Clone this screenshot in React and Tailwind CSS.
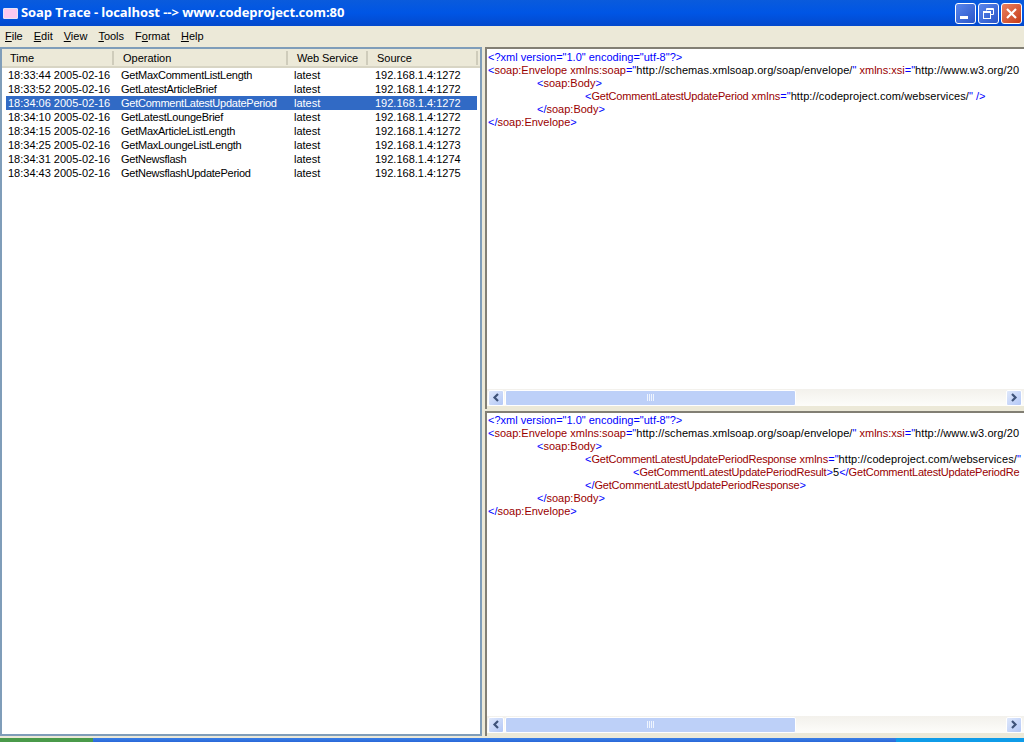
const rows = [
  ["18:33:44 2005-02-16", "GetMaxCommentListLength", "latest", "192.168.1.4:1272"],
  ["18:33:52 2005-02-16", "GetLatestArticleBrief", "latest", "192.168.1.4:1272"],
  ["18:34:06 2005-02-16", "GetCommentLatestUpdatePeriod", "latest", "192.168.1.4:1272"],
  ["18:34:10 2005-02-16", "GetLatestLoungeBrief", "latest", "192.168.1.4:1272"],
  ["18:34:15 2005-02-16", "GetMaxArticleListLength", "latest", "192.168.1.4:1272"],
  ["18:34:25 2005-02-16", "GetMaxLoungeListLength", "latest", "192.168.1.4:1273"],
  ["18:34:31 2005-02-16", "GetNewsflash", "latest", "192.168.1.4:1274"],
  ["18:34:43 2005-02-16", "GetNewsflashUpdatePeriod", "latest", "192.168.1.4:1275"],
];
const B = ({ children }) => <span className="text-[#0000ff]">{children}</span>;
const R = ({ children }) => <span className="text-[#990000]">{children}</span>;
const G = ({ children }) => <span className="text-[#990000] tracking-[-0.2px]">{children}</span>;
const K = ({ children }) => <span className="text-black tracking-[0.1px]">{children}</span>;

const Line = ({ indent = "", children }) => (
  <div className={`h-[13px] leading-[13px] whitespace-nowrap ${indent}`}>{children}</div>
);
const Tag = ({ name, close }) => (
  <>
    <B>{close ? "</" : "<"}</B>
    {name.startsWith("Get") ? <G>{name}</G> : <R>{name}</R>}
    <B>&gt;</B>
  </>
);
const Head = () => (
  <>
    <Line><B>&lt;?xml version="1.0" encoding="utf-8"?&gt;</B></Line>
    <Line>
      <B>&lt;</B><R>soap:Envelope xmlns:soap</R><B>="</B><K>http://schemas.xmlsoap.org/soap/envelope/</K><B>"</B>{" "}
      <R>xmlns:xsi</R><B>="</B><K>http://www.w3.org/20</K>
    </Line>
  </>
);
const Arrow = ({ dir }) => (
  <div className="w-[16px] h-[16px] shrink-0 rounded-[2px] border border-white bg-gradient-to-br from-[#dfe8fb] to-[#b4c8f6] flex items-center justify-center">
    <svg width="8" height="9" viewBox="0 0 8 9">
      <path d={dir === "l" ? "M6 1 L2.5 4.5 L6 8" : "M2 1 L5.5 4.5 L2 8"} fill="none" stroke="#3f5379" strokeWidth="2.2" />
    </svg>
  </div>
);
const Scrollbar = () => (
  <div className="h-[17px] shrink-0 bg-gradient-to-b from-[#f3f1ec] to-[#fdfdfa] flex items-center pl-[1px] pr-[2px] gap-[1px]">
    <Arrow dir="l" />
    <div className="flex-1 flex items-center">
      <div className="w-[291px] h-[16px] rounded-[2px] border border-white bg-[#bdd0f8] flex items-center justify-center gap-[1px]">
        {[0, 1, 2, 3].map((i) => (
          <div key={i} className="w-[1px] h-[7px] bg-[#eef4fe]" />
        ))}
      </div>
    </div>
    <Arrow dir="r" />
  </div>
);
const XmlPane = ({ className, pad, children }) => (
  <div className={`flex flex-col border-t-2 border-l-2 border-t-[#827f74] border-l-[#827f74] bg-[#ece9d8] min-h-0 overflow-hidden pb-[3px] ${className}`}>
    <div className={`flex-1 bg-white pl-[1px] overflow-hidden font-['Liberation_Sans',sans-serif] text-[11px] ${pad}`}>{children}</div>
    <Scrollbar />
  </div>
);
const WinBtn = ({ bg, children }) => (
  <div className={`w-[21px] h-[21px] rounded-[3px] border border-white flex items-center justify-center ${bg}`}>{children}</div>
);
const menu = [["F", "ile"], ["E", "dit"], ["V", "iew"], ["T", "ools"], ["Fo", "rmat"], ["H", "elp"]];

export default function App() {
  return (
    <div className="w-[1024px] h-[742px] flex flex-col overflow-hidden bg-[#ece9d8] font-['Liberation_Sans',sans-serif]">
      <div className="h-[26px] shrink-0 flex items-center pl-[2px] pr-[2px] bg-gradient-to-b from-[#0a5bdc] via-[#0055e5] to-[#0349cc]">
        <div className="w-[15px] h-[11px] ml-[1px] rounded-[1px] bg-[#fbc8f0] border border-[#e8e4f4]" />
        <div className="ml-[3px] text-white font-bold text-[13px] whitespace-nowrap font-['Open_Sans',sans-serif] tracking-[-0.07px]">
          Soap Trace - localhost --&gt; www.codeproject.com:80
        </div>
        <div className="ml-auto flex gap-[2px]">
          <WinBtn bg="bg-gradient-to-br from-[#5a86ec] to-[#2a55c8]">
            <div className="w-[8px] h-[3px] bg-white mt-[9px] mr-[4px]" />
          </WinBtn>
          <WinBtn bg="bg-gradient-to-br from-[#5a86ec] to-[#2a55c8]">
            <svg width="13" height="13" viewBox="0 0 13 13" fill="none" stroke="white">
              <path d="M4.5 3.5V1.5H11.5V7.5H9" />
              <rect x="1.5" y="4.5" width="7" height="7" />
              <path d="M1.5 5.5H8.5M4.5 2.5H11.5" />
            </svg>
          </WinBtn>
          <WinBtn bg="bg-gradient-to-br from-[#e9805f] to-[#c63a12]">
            <svg width="13" height="13" viewBox="0 0 13 13" stroke="white" strokeWidth="2.2" fill="none">
              <path d="M2 2L11 11M11 2L2 11" />
            </svg>
          </WinBtn>
        </div>
      </div>

      <div className="h-[20px] shrink-0 flex items-center pl-[5px] gap-[11px] text-[11px] text-black">
        {menu.map(([a, b]) => {
          const u = a.length > 1 ? a[1] : a;
          const pre = a.length > 1 ? a[0] : "";
          return (
            <span key={a}>
              {pre}
              <span className="underline">{u}</span>
              {b}
            </span>
          );
        })}
      </div>

      <div className="flex-1 flex min-h-0 pt-[1px] pb-[2px] gap-[3px]">
        <div className="w-[482px] shrink-0 border-2 border-[#7f9db9] bg-white flex flex-col text-[11px] text-black overflow-hidden">
          <div className="h-[19px] shrink-0 flex items-center bg-[#ece9d8] border-b-2 border-[#d8d5c4]">
            <div className="w-[112px] pl-[8px] border-r-2 border-[#cfccbb] h-[14px] leading-[14px]">Time</div>
            <div className="w-[174px] pl-[9px] border-r-2 border-[#cfccbb] h-[14px] leading-[14px]">Operation</div>
            <div className="w-[80px] pl-[9px] border-r-2 border-[#cfccbb] h-[14px] leading-[14px] tracking-[-0.1px] whitespace-nowrap">Web Service</div>
            <div className="w-[110px] pl-[9px] border-r-2 border-[#cfccbb] h-[14px] leading-[14px]">Source</div>
          </div>
          <div className="pl-[4px] w-[475px]">
            {rows.map((r, i) => (
              <div key={r[0]} className={`h-[14px] leading-[14px] flex whitespace-nowrap ${i === 2 ? "bg-[#316ac5] text-white" : ""}`}>
                <div className="w-[113px] pl-[2px]">{r[0]}</div>
                <div className="w-[174px] pl-[2px] tracking-[-0.25px]">{r[1]}</div>
                <div className="w-[81px] pl-[1px]">{r[2]}</div>
                <div className="pl-[1px]">{r[3]}</div>
              </div>
            ))}
          </div>
        </div>

        <div className="flex-1 flex flex-col min-w-0 gap-[2px]">
          <XmlPane className="h-[362px] shrink-0" pad="pt-[2px]">
            <Head />
            <Line indent="pl-[49px]"><Tag name="soap:Body" /></Line>
            <Line indent="pl-[97px]">
              <B>&lt;</B><G>GetCommentLatestUpdatePeriod</G> <R>xmlns</R><B>="</B><K>http://codeproject.com/webservices/</K><B>" /&gt;</B>
            </Line>
            <Line indent="pl-[49px]"><Tag name="soap:Body" close /></Line>
            <Line><Tag name="soap:Envelope" close /></Line>
          </XmlPane>
          <XmlPane className="flex-1" pad="pt-[1px]">
            <Head />
            <Line indent="pl-[49px]"><Tag name="soap:Body" /></Line>
            <Line indent="pl-[97px]">
              <B>&lt;</B><G>GetCommentLatestUpdatePeriodResponse</G> <R>xmlns</R><B>="</B><K>http://codeproject.com/webservices/</K><B>"</B>
            </Line>
            <Line indent="pl-[145px]">
              <Tag name="GetCommentLatestUpdatePeriodResult" /><K>5</K><B>&lt;/</B><G>GetCommentLatestUpdatePeriodRe</G>
            </Line>
            <Line indent="pl-[97px]"><Tag name="GetCommentLatestUpdatePeriodResponse" close /></Line>
            <Line indent="pl-[49px]"><Tag name="soap:Body" close /></Line>
            <Line><Tag name="soap:Envelope" close /></Line>
          </XmlPane>
        </div>
      </div>

      <div className="h-[4px] shrink-0 flex bg-gradient-to-b from-[#3a7fe6] to-[#2a68d8]">
        <div className="w-[93px] bg-[#4a9a4a]" />
        <div className="flex-1" />
        <div className="w-[128px] bg-[#0f9ce8]" />
      </div>
    </div>
  );
}
